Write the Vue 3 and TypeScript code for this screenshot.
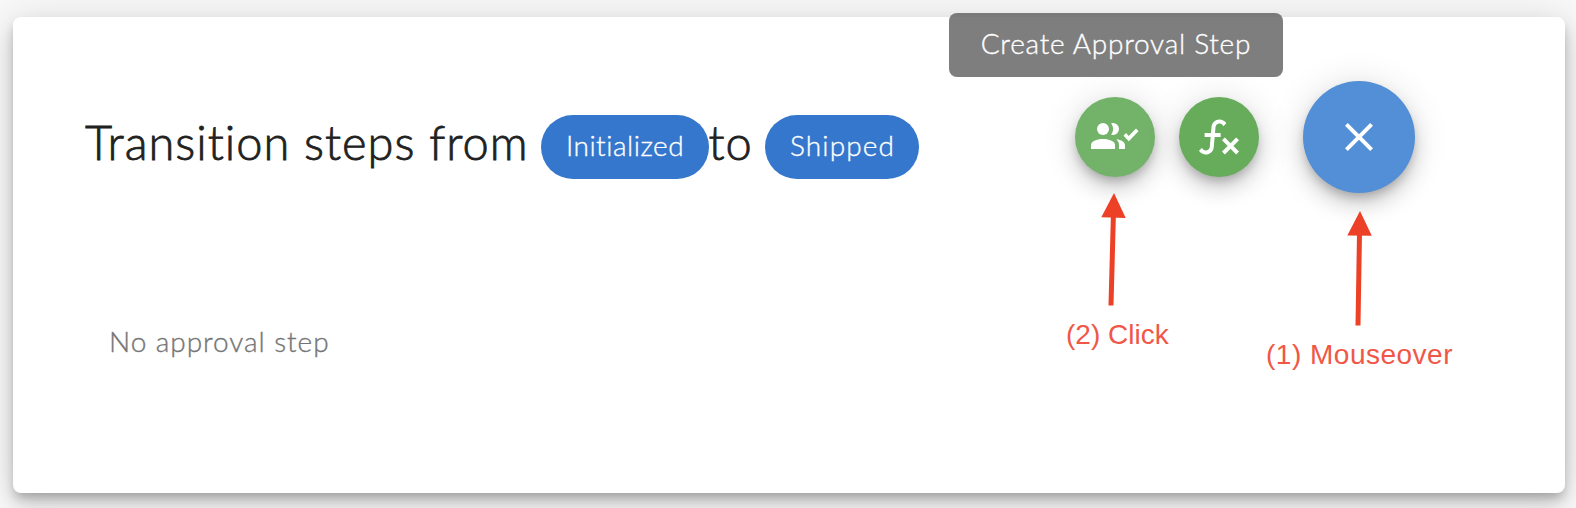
<script setup lang="ts">
interface Chip {
  label: string
  kind: string
}

const fromState: Chip = { label: 'Initialized', kind: 'from' }
const toState: Chip = { label: 'Shipped', kind: 'to' }
</script>

<template>
  <main class="page">
    <section class="card">
      <header class="header">
        <h1 class="title">
          <span class="lead">Transition steps from</span>
          <span class="chip" :class="fromState.kind">{{ fromState.label }}</span>
          <span class="joiner">to</span>
          <span class="chip" :class="toState.kind">{{ toState.label }}</span>
        </h1>
        <div class="actions">
          <button class="fab small hovered" aria-label="Create Approval Step">
            <svg viewBox="0 0 24 24" width="48" height="48">
              <circle cx="6" cy="8" r="3" />
              <path d="M6 13c-3.3 0-6 1.2-6 3v2h12v-2c0-1.8-2.7-3-6-3z" />
              <path d="M11 5a3 3 0 0 1 0 6c-.32 0-.63-.05-.92-.15a5 5 0 0 0 0-5.7c.29-.1.6-.15.92-.15z" />
              <path d="M12.6 13.15C13.5 13.9 14 14.9 14 16v2h3v-2c0-1.5-1.9-2.5-4.4-2.85z" />
              <path d="M22.5 7.8l-3.6 3.75-1.4-1.5-1.25 1.3 2.65 2.75 4.85-4.95z" />
            </svg>
          </button>
          <button class="fab small" aria-label="Create function step">
            <svg viewBox="0 0 24 24" width="48" height="48">
              <path d="M12.42,5.29C11.32,5.19 10.35,6 10.25,7.11L10,10H12.82V12H9.82L9.38,17.07C9.18,19.27 7.24,20.9 5.04,20.7C3.79,20.59 2.66,19.9 2,18.83L3.5,17.33C3.83,18.38 4.96,18.97 6,18.63C6.78,18.39 7.33,17.7 7.4,16.89L7.82,12H4.82V10H8L8.27,6.93C8.46,4.73 10.39,3.1 12.6,3.28C13.86,3.39 15,4.09 15.66,5.17L14.16,6.67C13.91,5.9 13.23,5.36 12.42,5.29M22,13.65L20.59,12.24L17.76,15.07L14.93,12.24L13.5,13.65L16.35,16.5L13.5,19.31L14.93,20.72L17.76,17.89L20.59,20.72L22,19.31L19.17,16.5L22,13.65Z" />
            </svg>
          </button>
          <button class="fab large" aria-label="Close">
            <svg viewBox="0 0 24 24" width="48" height="48">
              <path d="M19,6.41L17.59,5L12,10.59L6.41,5L5,6.41L10.59,12L5,17.59L6.41,19L12,13.41L17.59,19L19,17.59L13.41,12L19,6.41Z" />
            </svg>
          </button>
        </div>
      </header>
      <p class="empty"><span>No approval step</span></p>
    </section>

    <div class="tooltip"><span>Create Approval Step</span></div>

    <svg class="arrows" viewBox="0 0 1576 508" width="1576" height="508">
      <path d="M1113.4 215L1111 305.5" />
      <polygon points="1114,193 1101.3,217.3 1125.7,218" />
      <path d="M1359.5 233L1358 325.5" />
      <polygon points="1360,211 1347.3,235.5 1371.8,235.8" />
    </svg>
    <div class="note click"><span>(2) Click</span></div>
    <div class="note mouseover"><span>(1) Mouseover</span></div>
  </main>
</template>

<style>
body {
  margin: 0;
  background: #fafafa;
}
</style>

<style scoped>
.page {
  position: relative;
  box-sizing: border-box;
  width: 1576px;
  height: 508px;
  padding: 17px 11px 15px 13px;
  overflow: hidden;
  background: #f8f8f8;
  font-family: Lato, "Open Sans", sans-serif;
  font-weight: 300;
  -webkit-text-stroke-width: 0.35px;
}

.card {
  box-sizing: border-box;
  height: 476px;
  padding: 64px 150px 0 72px;
  border-radius: 8px;
  background: #fff;
  box-shadow:
    0 6px 10px -2px rgba(0, 0, 0, 0.2),
    0 12px 20px 0 rgba(0, 0, 0, 0.14),
    0 2px 36px 0 rgba(0, 0, 0, 0.12);
}

.header {
  display: flex;
  justify-content: space-between;
  height: 112px;
}

.title {
  display: flex;
  align-items: flex-start;
  height: 64px;
  margin: 34px 0 0;
  color: #212121;
  font-size: 47px;
  font-weight: 300;
  line-height: 55px;
  white-space: nowrap;
}

.lead,
.joiner {
  -webkit-text-stroke-width: 0.8px;
}

.lead {
  width: 456px;
  letter-spacing: 1px;
}

.joiner {
  width: 56px;
  letter-spacing: 1px;
  text-indent: -0.5px;
}

.chip {
  box-sizing: border-box;
  height: 64px;
  border-radius: 32px;
  background: #3577cc;
  color: #fff;
  font-size: 28px;
  line-height: 60px;
  text-align: center;
}

.from {
  width: 168px;
  letter-spacing: 0.5px;
}

.to {
  width: 154px;
  letter-spacing: 1.1px;
  text-indent: 1px;
}

.actions {
  display: flex;
  align-items: center;
  gap: 24px;
}

.fab {
  display: flex;
  align-items: center;
  justify-content: center;
  padding: 0;
  border: 0;
  border-radius: 50%;
  box-shadow:
    0 6px 10px -2px rgba(0, 0, 0, 0.2),
    0 12px 20px 0 rgba(0, 0, 0, 0.14),
    0 2px 36px 0 rgba(0, 0, 0, 0.12);
}

.fab svg {
  display: block;
  fill: #fff;
}

.small {
  width: 80px;
  height: 80px;
  background: #67ac5b;
}

.hovered {
  background: #73b369;
}

.large {
  width: 112px;
  height: 112px;
  margin-left: 20px;
  background: #538fd6;
}

.empty {
  margin: 128px 0 0 24px;
  color: #757575;
  font-size: 28px;
  line-height: 40px;
  letter-spacing: 0.95px;
}

.tooltip {
  position: absolute;
  top: 13px;
  left: 949px;
  width: 334px;
  height: 64px;
  border-radius: 8px;
  background: rgba(97, 97, 97, 0.82);
  color: #fff;
  font-size: 28px;
  line-height: 60px;
  letter-spacing: 0.75px;
  text-align: center;
}

.arrows {
  position: absolute;
  top: 0;
  left: 0;
  fill: #ec4126;
}

.arrows path {
  fill: none;
  stroke: #ec4126;
  stroke-width: 5;
}

.note {
  position: absolute;
  color: #f05747;
  font-family: "Liberation Sans", sans-serif;
  font-size: 28px;
  font-weight: 400;
  line-height: 32px;
  white-space: nowrap;
  -webkit-text-stroke-width: 0;
}

.click {
  top: 319px;
  left: 1066px;
}

.mouseover {
  top: 339px;
  left: 1266px;
  letter-spacing: 0.5px;
}
</style>
